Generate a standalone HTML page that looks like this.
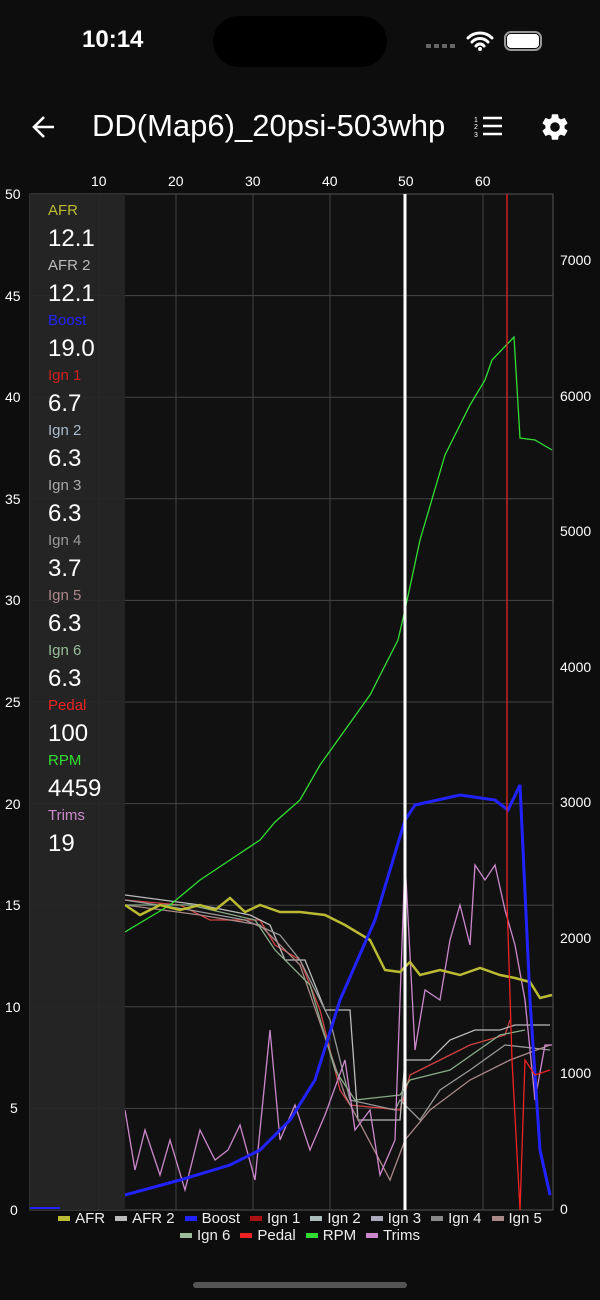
<!DOCTYPE html>
<html><head><meta charset="utf-8"><style>
body{margin:0;width:600px;height:1300px;background:#0d0d0d;overflow:hidden;font-family:"Liberation Sans",sans-serif;color:#fff;position:relative}
.a{position:absolute}
.ov div.n{font-size:15px;line-height:20px}
.ov div.v{font-size:24px;line-height:35px;color:#fff}
.lg{font-size:15px;color:#eee;display:flex;align-items:center;gap:5px}
.lg i{display:inline-block;width:12px;height:5px}
</style></head><body>
<div class="a" style="left:82px;top:26px;font-size:24px;font-weight:bold">10:14</div>
<div class="a" style="left:213px;top:16px;width:174px;height:51px;border-radius:26px;background:#000"></div>
<div class="a" style="left:426px;top:44px;width:32px;height:4px;background:repeating-linear-gradient(90deg,#666 0 5px,transparent 5px 8px)"></div>
<svg class="a" style="left:466px;top:30px" width="28" height="22" viewBox="0 0 28 22"><path d="M2 8a17 17 0 0 1 24 0M6 12a11 11 0 0 1 16 0M10 16a5 5 0 0 1 8 0" stroke="#fff" stroke-width="3" fill="none" stroke-linecap="round"/><circle cx="14" cy="19" r="2" fill="#fff"/></svg>
<div class="a" style="left:504px;top:31px;width:38px;height:20px;border:2px solid #999;border-radius:7px;box-sizing:border-box"></div>
<div class="a" style="left:507px;top:34px;width:32px;height:14px;background:#fff;border-radius:4px"></div>
<svg class="a" style="left:30px;top:113px" width="28" height="28" viewBox="0 0 28 28"><path d="M24 14H5M14 4L4 14l10 10" stroke="#fff" stroke-width="2.6" fill="none"/></svg>
<div class="a" style="left:92px;top:108px;font-size:31px">DD(Map6)_20psi-503whp</div>
<svg class="a" style="left:472px;top:114px" width="32" height="26" viewBox="0 0 32 26"><path d="M11 4h19M11 12h19M11 20h19" stroke="#fff" stroke-width="2.6"/><text x="2" y="8" font-size="7" fill="#fff" font-family="Liberation Sans">1</text><text x="2" y="15" font-size="7" fill="#fff" font-family="Liberation Sans">2</text><text x="2" y="23" font-size="7" fill="#fff" font-family="Liberation Sans">3</text></svg>
<svg class="a" style="left:539px;top:111px" width="32" height="32" viewBox="0 0 24 24"><path fill="#fff" d="M19.14 12.94c.04-.3.06-.61.06-.94 0-.32-.02-.64-.07-.94l2.03-1.58a.49.49 0 0 0 .12-.61l-1.920-3.32a.49.49 0 0 0-.59-.22l-2.39.96c-.5-.38-1.03-.7-1.62-.94l-.36-2.54a.48.48 0 0 0-.48-.41h-3.84c-.24 0-.43.17-.47.41l-.36 2.54c-.59.24-1.13.57-1.62.94l-2.39-.96a.49.49 0 0 0-.59.22L2.74 8.870a.47.47 0 0 0 .12.61l2.03 1.58c-.05.3-.09.63-.09.94s.02.64.07.94l-2.030 1.58a.49.49 0 0 0-.12.61l1.92 3.32c.12.22.37.29.59.22l2.39-.96c.5.38 1.03.7 1.62.94l.36 2.54c.05.24.24.41.48.41h3.84c.24 0 .44-.17.47-.41l.36-2.54c.59-.24 1.13-.56 1.62-.94l2.39.96c.22.08.47 0 .59-.22l1.92-3.32a.47.47 0 0 0-.12-.61l-2.01-1.58zM12 15.6A3.6 3.6 0 1 1 12 8.4a3.6 3.6 0 0 1 0 7.2z"/></svg>

<svg class="a" style="left:0;top:0" width="600" height="1300">
<rect x="30" y="194" width="523" height="1016" fill="#111" stroke="#555"/>
<g stroke="#444" stroke-width="1">
<path d="M99 194V1210M176 194V1210M253 194V1210M330 194V1210M483 194V1210"/>
<path d="M30 295.6H553M30 397.2H553M30 498.8H553M30 600.4H553M30 702H553M30 803.6H553M30 905.2H553M30 1006.8H553M30 1108.4H553"/>
</g>
<g font-family="Liberation Sans" font-size="14" fill="#fff">
<text x="91" y="186">10</text><text x="168" y="186">20</text><text x="245" y="186">30</text><text x="322" y="186">40</text><text x="398" y="186">50</text><text x="475" y="186">60</text>
<text x="5" y="199">50</text><text x="5" y="301">45</text><text x="5" y="402">40</text><text x="5" y="504">35</text><text x="5" y="605">30</text><text x="5" y="707">25</text><text x="5" y="809">20</text><text x="5" y="910">15</text><text x="5" y="1012">10</text><text x="10" y="1113">5</text><text x="10" y="1215">0</text>
<text x="560" y="265">7000</text><text x="560" y="401">6000</text><text x="560" y="536">5000</text><text x="560" y="672">4000</text><text x="560" y="807">3000</text><text x="560" y="943">2000</text><text x="560" y="1078">1000</text><text x="560" y="1214">0</text>
</g>
<g fill="none" stroke-width="1.3">
<polyline stroke="#c44" points="125,900 180,905 210,920 260,920 275,945 300,960 320,1010 340,1090 350,1105 400,1110 410,1075 440,1060 470,1045 505,1035 510,1020"/>
<polyline stroke="#bbb" points="125,895 200,905 250,915 270,925 285,960 305,960 325,1010 350,1010 358,1120 400,1120 405,1060 430,1060 450,1040 475,1030 500,1030 515,1025 550,1025"/>
<polyline stroke="#999" points="125,900 190,910 245,920 280,935 300,960 330,1020 350,1100 395,1110 400,1100 420,1120 440,1090 470,1070 505,1045 550,1050"/>
<polyline stroke="#a88" points="125,905 200,915 260,925 300,965 345,1095 390,1180 405,1140 430,1110 470,1080 510,1060 550,1045"/>
<polyline stroke="#8a8" points="125,905 190,905 255,920 275,950 310,985 335,1070 355,1100 400,1095 410,1080 450,1070 500,1035 525,1030"/>
<polyline stroke="#c8c" points="125,1110 135,1170 145,1130 160,1175 170,1140 185,1190 200,1130 215,1160 228,1150 240,1125 255,1180 270,1030 280,1140 295,1105 310,1150 325,1115 345,1060 355,1130 370,1110 380,1175 395,1140 405,860 415,1050 425,990 440,1000 450,940 460,905 470,945 475,865 485,880 495,865 505,910 515,945 525,1000 535,1100 545,1045 552,1045"/>
<polyline stroke="#3d3" points="125,932 170,905 200,880 230,860 260,840 275,822 300,800 320,765 345,730 370,695 398,640 405,610 420,540 445,455 470,405 485,380 492,360 514,337 520,438 535,440 552,450"/>
<polyline stroke="#bb3" stroke-width="2.5" points="125,905 140,915 160,905 180,910 200,905 215,910 230,898 245,912 260,905 280,912 300,912 325,915 345,925 370,940 385,970 400,972 410,962 420,975 440,970 460,975 480,968 500,975 515,978 530,982 540,998 552,995"/>
<polyline stroke="#22f" stroke-width="3" points="125,1195 180,1180 230,1165 260,1150 290,1120 315,1080 340,1000 375,920 405,820 415,805 460,795 495,800 508,810 520,785 530,1000 540,1150 550,1195"/>
<polyline stroke="#e22" points="507,194 507,900 512,1060 520,1210 525,1060 535,1075 550,1070"/>
</g>
<rect x="30" y="194" width="95" height="1016" fill="#262626" opacity="0.92"/>
<polyline fill="none" stroke="#22f" stroke-width="2" points="30,1208 60,1208"/>
<path d="M405 194V1210" stroke="#fff" stroke-width="3"/>
</svg>

<div class="a ov" style="left:48px;top:201px">
<div class="n" style="color:#bb3">AFR</div><div class="v">12.1</div>
<div class="n" style="color:#bbb">AFR 2</div><div class="v">12.1</div>
<div class="n" style="color:#22f">Boost</div><div class="v">19.0</div>
<div class="n" style="color:#c22">Ign 1</div><div class="v">6.7</div>
<div class="n" style="color:#abc">Ign 2</div><div class="v">6.3</div>
<div class="n" style="color:#aaa">Ign 3</div><div class="v">6.3</div>
<div class="n" style="color:#999">Ign 4</div><div class="v">3.7</div>
<div class="n" style="color:#a88">Ign 5</div><div class="v">6.3</div>
<div class="n" style="color:#9b9">Ign 6</div><div class="v">6.3</div>
<div class="n" style="color:#e22">Pedal</div><div class="v">100</div>
<div class="n" style="color:#3d3">RPM</div><div class="v">4459</div>
<div class="n" style="color:#c8c">Trims</div><div class="v">19</div>
</div>

<div class="a" style="left:0;top:1210px;width:600px;display:flex;justify-content:center;gap:10px">
<span class="lg"><i style="background:#bb3"></i>AFR</span><span class="lg"><i style="background:#bbb"></i>AFR 2</span><span class="lg"><i style="background:#22f"></i>Boost</span><span class="lg"><i style="background:#a11"></i>Ign 1</span><span class="lg"><i style="background:#abb"></i>Ign 2</span><span class="lg"><i style="background:#aab"></i>Ign 3</span><span class="lg"><i style="background:#888"></i>Ign 4</span><span class="lg"><i style="background:#a88"></i>Ign 5</span>
</div>
<div class="a" style="left:0;top:1227px;width:600px;display:flex;justify-content:center;gap:10px">
<span class="lg"><i style="background:#9b9"></i>Ign 6</span><span class="lg"><i style="background:#e22"></i>Pedal</span><span class="lg"><i style="background:#3d3"></i>RPM</span><span class="lg"><i style="background:#c8c"></i>Trims</span>
</div>
<div class="a" style="left:193px;top:1282px;width:214px;height:6px;border-radius:3px;background:#555"></div>
</body></html>
